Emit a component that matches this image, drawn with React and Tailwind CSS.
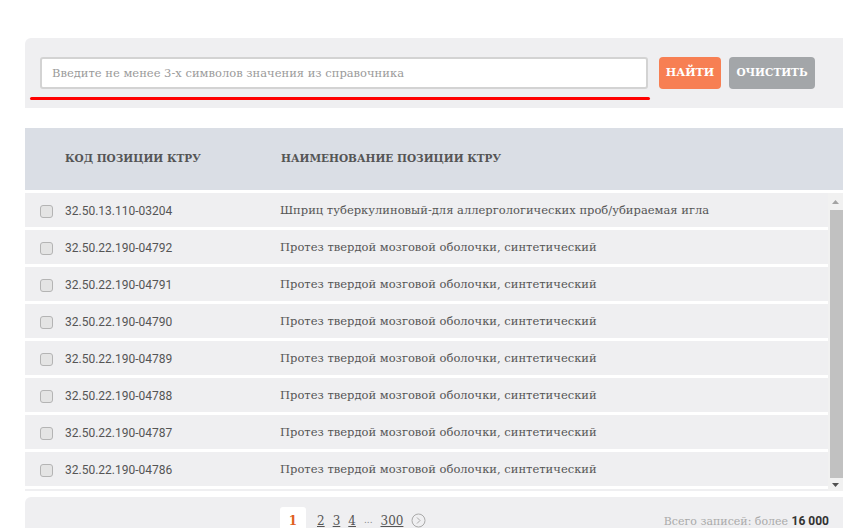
import { useState } from 'react';

const slab = { fontFamily: '"DejaVu Serif", "Liberation Serif", serif' };
const sans = { fontFamily: 'Roboto, "Liberation Sans", sans-serif' };

const rows = [
  ['32.50.13.110-03204', 'Шприц туберкулиновый-для аллергологических проб/убираемая игла'],
  ['32.50.22.190-04792', 'Протез твердой мозговой оболочки, синтетический'],
  ['32.50.22.190-04791', 'Протез твердой мозговой оболочки, синтетический'],
  ['32.50.22.190-04790', 'Протез твердой мозговой оболочки, синтетический'],
  ['32.50.22.190-04789', 'Протез твердой мозговой оболочки, синтетический'],
  ['32.50.22.190-04788', 'Протез твердой мозговой оболочки, синтетический'],
  ['32.50.22.190-04787', 'Протез твердой мозговой оболочки, синтетический'],
  ['32.50.22.190-04786', 'Протез твердой мозговой оболочки, синтетический'],
];

export default function App() {
  const [query, setQuery] = useState('');
  const [checked, setChecked] = useState({});

  return (
    <div className="w-[843px] h-[528px] overflow-hidden bg-white pl-[25px] pt-[38px]" style={slab}>
      {/* Поиск */}
      <div className="bg-[#efeff1] rounded-tl-[6px] h-[70px] pt-[19px] pl-[15px]">
        <div className="flex items-center">
          <input
            value={query}
            onChange={(e) => setQuery(e.target.value)}
            placeholder="Введите не менее 3-х символов значения из справочника"
            className="w-[608px] h-[32px] bg-white border-2 border-[#d3d3d3] rounded-[3px] px-[10px] text-[11.5px] text-[#555] placeholder:text-[#9a9a9a] outline-none"
            style={slab}
          />
          <button className="ml-[11px] w-[62px] h-[32px] rounded-[4px] bg-[#f77f53] text-white text-[11px] font-bold">
            НАЙТИ
          </button>
          <button className="ml-[8px] w-[86px] h-[32px] rounded-[4px] bg-[#a3a6a9] text-white text-[10.5px] font-bold">
            ОЧИСТИТЬ
          </button>
        </div>
        <div className="mt-[8px] ml-[-10px] w-[620px] h-[3px] rounded-full bg-[#ff0000]" />
      </div>

      {/* Таблица */}
      <div className="mt-[20px] h-[62px] bg-[#dadee5] flex items-center text-[10.5px] font-bold text-[#555]">
        <div className="w-[256px] pl-[40px]">КОД ПОЗИЦИИ КТРУ</div>
        <div>НАИМЕНОВАНИЕ ПОЗИЦИИ КТРУ</div>
      </div>
      <div className="mt-[3px] h-[298px] flex">
        <div className="flex-1 overflow-hidden">
          {rows.map(([code, name]) => (
            <label
              key={code}
              className="flex items-center h-[34px] mb-[3px] bg-[#efeff1] cursor-pointer pt-[2px]"
            >
              <input
                type="checkbox"
                checked={!!checked[code]}
                onChange={() => setChecked({ ...checked, [code]: !checked[code] })}
                className="ml-[15px] w-[13px] h-[13px] appearance-none rounded-[3px] border border-[#b4b4b4] bg-[#e4e4e4] checked:bg-[#999]"
              />
              <span className="w-[227px] pl-[12px] text-[12px] text-[#555]" style={sans}>
                {code}
              </span>
              <span className="text-[11.5px] text-[#555]">{name}</span>
            </label>
          ))}
          {/* следующая строка, видна только верхняя кромка */}
          <div className="h-[34px] bg-[#efeff1]" />
        </div>
        {/* Полоса прокрутки */}
        <div className="w-[15px] bg-[#f1f1f1] flex flex-col">
          <div className="h-[17px] flex items-center justify-center">
            <svg width="7" height="4" viewBox="0 0 7 4">
              <path d="M0 4 L3.5 0 L7 4 Z" fill="#a3a3a3" />
            </svg>
          </div>
          <div className="h-[268px] ml-[2px] bg-[#c1c1c1]" />
          <div className="flex-1 flex items-center justify-center">
            <svg width="7" height="4" viewBox="0 0 7 4">
              <path d="M0 0 L7 0 L3.5 4 Z" fill="#505050" />
            </svg>
          </div>
        </div>
      </div>

      {/* Пагинация */}
      <div className="mt-[6px] h-[40px] bg-[#efeff1] rounded-tl-[6px] flex items-start pt-[8px]">
        <div className="ml-[255px] flex items-center text-[12px] text-[#555] pt-[2px]">
          <span className="w-[26px] h-[24px] bg-white rounded-t-[3px] flex items-center justify-center text-[#e0601f] font-bold pt-[3px]">
            1
          </span>
          <a className="ml-[11px] underline pt-[3px]">2</a>
          <a className="ml-[8px] underline pt-[3px]">3</a>
          <a className="ml-[8px] underline pt-[3px]">4</a>
          <span className="ml-[8px] text-[9px] text-[#888] pt-[3px]">...</span>
          <a className="ml-[8px] underline pt-[3px]">300</a>
          <svg className="ml-[8px] mt-[3px]" width="15" height="15" viewBox="0 0 15 15">
            <circle cx="7.5" cy="7.5" r="6.5" fill="none" stroke="#aaa" strokeWidth="1" />
            <path d="M6 4.5 L9 7.5 L6 10.5" fill="none" stroke="#aaa" strokeWidth="1" />
          </svg>
        </div>
        <div className="ml-auto mr-[14px] text-[11px] text-[#aaa] pt-[7px]">
          Всего записей: более <b className="text-[12px] text-[#333]" style={sans}>16 000</b>
        </div>
      </div>
    </div>
  );
}
